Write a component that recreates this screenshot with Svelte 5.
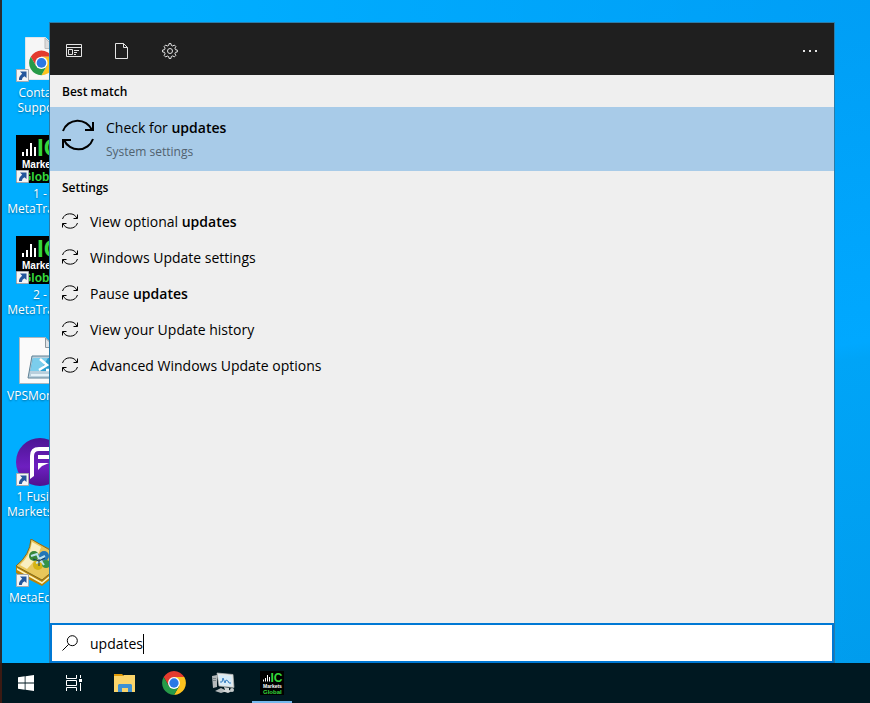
<script>
    let query = $state('updates');

    const shortcuts = [
        { lines: ['Contact', 'Support'], icon: 'support', link: true },
        { lines: ['1 -', 'MetaTrader'], icon: 'markets', link: true },
        { lines: ['2 -', 'MetaTrader'], icon: 'markets', link: true },
        { lines: ['VPSMonitor'], icon: 'script', link: false },
        { lines: ['1 Fusion', 'Markets MT'], icon: 'fusion', link: true },
        { lines: ['MetaEditor'], icon: 'editor', link: true }
    ];

    const settings = [
        { text: 'View optional ', match: 'updates' },
        { text: 'Windows Update settings' },
        { text: 'Pause ', match: 'updates' },
        { text: 'View your Update history' },
        { text: 'Advanced Windows Update options' }
    ];
</script>

{#snippet sync(size, stroke)}
    <svg width={size} height={size} viewBox="0 0 32 32" fill="none" stroke="#000" stroke-width={stroke}>
        <path d="M1 12A15.6 15.6 0 0 1 30 11M31 3v8h-8M31 20A15.6 15.6 0 0 1 2 21M1 29v-8h8" />
    </svg>
{/snippet}

{#snippet chromeShapes()}
    <path fill="#e33b2e" d="M4.95 13A22 22 0 0 1 43.05 13H24L14.47 29.5Z" />
    <path fill="#fcc31e" d="M43.05 13A22 22 0 0 1 24 46L33.53 29.5L24 13Z" />
    <path fill="#269a48" d="M24 46A22 22 0 0 1 4.95 13L14.47 29.5H33.53Z" />
    <circle cx="24" cy="24" r="11" fill="#fff" />
    <circle cx="24" cy="24" r="8.6" fill="#2a78e4" />
{/snippet}

{#snippet markets(size)}
    <svg width={size} height={size} viewBox="0 0 48 48" font-family="Liberation Sans, Arial, sans-serif" font-weight="bold">
        <rect width="48" height="48" />
        <path fill="#fff" d="M6 17h2v4H6zM10 14h2v7h-2zM14 8h2v13h-2zM18 12h2v9h-2z" />
        <text x="21" y="21" font-size="24" fill="#35d83c">IC</text>
        <text x="6" y="33" font-size="10" fill="#fff">Markets</text>
        <text x="6" y="46" font-size="12" fill="#35d83c">Global</text>
    </svg>
{/snippet}

{#snippet shortcutIcon(kind)}
    {#if kind === 'markets'}
        {@render markets(48)}
    {:else if kind === 'support'}
        <svg width="48" height="48" viewBox="0 0 48 48">
            <path fill="#f6f6f6" stroke="#dfe5ea" d="M9.500 3.500h20l10 10v32h-30z" />
            <path fill="#dcdcdc" stroke="#bbb" d="M29 4v10.500h10.500z" />
            <g transform="translate(12 15.500) scale(.56)">{@render chromeShapes()}</g>
        </svg>
    {:else if kind === 'script'}
        <svg width="48" height="48" viewBox="0 0 48 48">
            <path fill="#fafafa" stroke="#aeb7bd" d="M3.500 .5h26l10 10v36h-36z" />
            <path fill="#dfe4e8" stroke="#8d979e" d="M29.500 1v9.500H39z" />
            <path fill="#b9cfdc" stroke="#5f8296" d="M16 19h30l-4 22H12z" />
            <path fill="#2a9fd0" d="M17 21h28l-2.500 13H14.500z" />
            <path fill="#7bcdec" d="M17 21h15l-8 13h-9.500z" />
            <path fill="none" stroke="#fff" stroke-width="2.500" d="M24 22l7 6-8 5M30 33h6" />
            <path stroke="#e4f2f8" stroke-width="2" d="M15 38h27" />
        </svg>
    {:else if kind === 'fusion'}
        <svg width="48" height="48" viewBox="0 0 48 48">
            <defs>
                <linearGradient id="fusion" x1="0" y1="0" x2="0" y2="1">
                    <stop offset="0" stop-color="#4b1593" />
                    <stop offset=".6" stop-color="#6e1fc0" />
                    <stop offset="1" stop-color="#4e128f" />
                </linearGradient>
            </defs>
            <circle cx="24" cy="24" r="24" fill="url(#fusion)" />
            <path fill="none" stroke="#fff" stroke-width="4" d="M16 38V18q0-7 7-7h19" />
            <path fill="#fff" d="M14 36h4v2l-4 3zM22 17h19l-4 4H22zM22 25h11l-7 3-4 4z" />
        </svg>
    {:else}
        <svg width="48" height="48" viewBox="0 0 48 48">
            <path fill="#f7f3df" stroke="#9a8446" d="M17 2l27 13v9L27 37 9 24z" />
            <path fill="#b98309" d="M0 27l26 14 22-19v8L26 47 0 34z" />
            <path fill="#fff4b8" d="M1 29l25 14 21-17v2L26 45 1 31z" />
            <path fill="#e9c75a" stroke="#8a6815" d="M15 0Q14 16 0 27l26 14q14-10 18-24z" />
            <path fill="#f9efc2" d="M16 3q-2 14-12 23l7 4Q22 19 25 8z" />
            <circle cx="18" cy="17" r="5" fill="#368639" />
            <circle cx="28" cy="17" r="5" fill="#2377b7" />
            <circle cx="22" cy="26" r="5" fill="#d5b413" />
            <circle cx="30" cy="25" r="4" fill="#359247" />
            <path fill="none" stroke="#bfe3ee" stroke-width="2" d="M15 17l6-2 2 5 6-3M20 24l5-2 3 4" />
            <path fill="none" stroke="#183d57" d="M17 20l6 2 6-3M23 20v7" />
        </svg>
    {/if}
{/snippet}

<div class="screen">
    <main class="desktop">
        <div class="shortcuts">
            {#each shortcuts as item}
                <div class="shortcut">
                    <div class="picture">
                        {@render shortcutIcon(item.icon)}
                        {#if item.link}
                            <svg class="badge" width="13" height="13" viewBox="0 0 13 13">
                                <path fill="#f5f5f5" stroke="#a6aab0" d="M.5 .5h12v12H.5z" />
                                <path fill="#24569c" d="M4 2.500h6.500V9L8.500 7.200Q6 8.500 5.800 11H3Q2.500 7.500 6.200 4.800z" />
                            </svg>
                        {/if}
                    </div>
                    {#each item.lines as line}
                        <span>{line}</span>
                    {/each}
                </div>
            {/each}
        </div>

        <section class="panel">
            <header class="tabs">
                <button aria-label="Apps">
                    <svg width="16" height="16" viewBox="0 0 16 16" fill="none" stroke="#e4e4e4">
                        <path d="M.5 1.500h15v12H.5zM.5 4.500h15M2.500 6.500h4v5h-4zM8 7.500h5M8 9.500h3M8 11.500h2" />
                    </svg>
                </button>
                <button aria-label="Documents">
                    <svg width="16" height="16" viewBox="0 0 16 16" fill="none" stroke="#e4e4e4">
                        <path d="M1.500 .5h8l4 4v11h-12zM9.500 .5v4h4" />
                    </svg>
                </button>
                <button aria-label="Settings">
                    <svg width="16" height="16" viewBox="0 0 16 16" fill="none" stroke="#e4e4e4">
                        <path d="M6.700 2.400L7 .6h2l.3 1.800 1.500.6 1.500-1 1.600 1.600-1 1.500.6 1.600 1.800.3v2l-1.800.3-.6 1.500 1 1.500-1.600 1.600-1.500-1-1.500.6L9 15.400H7l-.3-1.800-1.500-.6-1.500 1-1.600-1.600 1-1.500-.6-1.600L.6 9V7l1.900-.3.6-1.600-1-1.500 1.600-1.600 1.500 1z" />
                        <circle cx="8" cy="8" r="2.500" />
                    </svg>
                </button>
                <button class="more" aria-label="More options">
                    <svg width="16" height="16" viewBox="0 0 16 16" fill="#e4e4e4">
                        <path d="M1 7h2v2H1zM7 7h2v2H7zM13 7h2v2h-2z" />
                    </svg>
                </button>
            </header>

            <h2>Best match</h2>
            <button class="best">
                {@render sync(32, 2)}
                <span class="detail">
                    <span>Check for <b>updates</b></span>
                    <small>System settings</small>
                </span>
            </button>

            <h2>Settings</h2>
            <ul>
                {#each settings as { text, match }}
                    <li>
                        <button class="result">
                            {@render sync(16, 2)}
                            <span>{text}{#if match}<b>{match}</b>{/if}</span>
                        </button>
                    </li>
                {/each}
            </ul>

            <label class="search">
                <svg width="16" height="16" viewBox="0 0 16 16" fill="none" stroke="#000">
                    <circle cx="10.300" cy="5.700" r="5" />
                    <path d="M6.700 9.300L.5 15.500" />
                </svg>
                <span class="field">
                    <input type="text" aria-label="Search" bind:value={query} />
                    <i class="caret"></i>
                </span>
            </label>
        </section>
    </main>

    <nav class="taskbar">
        <button aria-label="Start">
            <svg width="16" height="16" viewBox="0 0 16 16" fill="#fff">
                <path d="M0 2.200L6.700 1.300V7.600H0zM7.500 1.200L16 0V7.600H7.500zM0 8.400H6.700V14.700L0 13.800zM7.500 8.400H16V16L7.500 14.800z" />
            </svg>
        </button>
        <button aria-label="Task view">
            <svg width="16" height="16" viewBox="0 0 16 16" fill="none" stroke="#fff">
                <path d="M.5 0v3.500h10V0M.5 5.500h10v5H.5zM.5 16v-3.500h10V16M14.500 0v3M14.500 8v8" />
                <path fill="#fff" stroke="none" d="M13 4h3v3h-3z" />
            </svg>
        </button>
        <div class="apps">
            <button aria-label="File Explorer">
                <svg width="24" height="24" viewBox="0 0 24 24">
                    <path fill="#e19b08" d="M1 3h8l2 2H1z" />
                    <path fill="#fbd56b" d="M1 5h9l1-1h11v17H1z" />
                    <path fill="#3e91d4" d="M6 13h12l1 1v7h-4v-4H9v4H5v-7z" />
                </svg>
            </button>
            <button aria-label="Chrome">
                <svg width="26" height="26" viewBox="0 0 48 48">{@render chromeShapes()}</svg>
            </button>
            <button aria-label="Monitor">
                <svg width="24" height="24" viewBox="0 0 24 24">
                    <path fill="#b4b9bb" d="M1 5l5-1v12l-4 1zM4 20l6-3 6 3-6 2z" />
                    <path fill="#7c8588" d="M2 7h3v1H2zM2 9h3v1H2z" />
                    <path fill="#e6e8e7" stroke="#b5babb" stroke-width=".7" d="M6 2l16 1.500 1 13L8 15z" />
                    <path fill="#d7ebf8" d="M7.500 4l13 1 .5 10-12-1z" />
                    <path fill="none" stroke="#397fc1" d="M9 11h2l1-4 2 5 1-3 2 1 1 2h2" />
                    <path fill="#d4d7d7" d="M13 16l5 1v2l3 1-4 2-6-2 3-1z" />
                    <circle cx="21" cy="19" r="2" fill="#c5caca" />
                </svg>
            </button>
            <button class="active" aria-label="IC Markets Global">
                {@render markets(24)}
            </button>
        </div>
    </nav>
</div>

<style>
    :global(body) {
        margin: 0;
    }
    .screen {
        box-sizing: border-box;
        display: grid;
        font-family: "Open Sans", "Noto Sans", sans-serif;
        grid-template-rows: 1fr 40px;
        min-height: 100vh;
    }
    svg {
        display: block;
        flex: none;
    }
    button {
        background: none;
        border: 0;
        color: inherit;
        font: inherit;
        padding: 0;
        text-align: left;
    }
    b {
        font-weight: 600;
    }
    .desktop {
        background:
            linear-gradient(to right, #00aeff 20%, #00aeff00 100%),
            linear-gradient(172deg, #009bf6 0%, #009ff6 20%, #00a8ff 59%, #00a4f7 61%, #009ced 100%);
        border-left: 2px solid #292c31;
        display: flex;
    }
    .shortcuts {
        display: grid;
        grid-auto-rows: 101px;
        grid-template-columns: 76px;
        overflow: hidden;
        padding-top: 34px;
        width: 47px;
    }
    .shortcut {
        align-items: center;
        color: #fff;
        display: flex;
        flex-direction: column;
        font-size: 12px;
        line-height: 15px;
        text-shadow: 0 1px 2px #0006;
        white-space: nowrap;
    }
    .picture {
        margin-bottom: 3px;
        position: relative;
    }
    .badge {
        bottom: 0;
        left: 0;
        position: absolute;
    }
    .panel {
        background: #efefef;
        border: 1px solid #2b7ba8;
        border-bottom: 0;
        box-sizing: border-box;
        color: #000;
        display: flex;
        flex: 1;
        flex-direction: column;
        font-size: 14px;
        line-height: 20px;
        margin: 22px 35px 0 0;
    }
    .tabs {
        background: #1f1f1f;
        display: flex;
        gap: 32px;
        padding: 20px 16px 16px;
    }
    .more {
        margin-left: auto;
    }
    h2 {
        font-size: 12px;
        font-weight: 600;
        line-height: 30px;
        margin: 0;
        padding: 2px 12px 0;
    }
    .best {
        align-items: flex-start;
        background: #a8cbe8;
        display: flex;
        gap: 12px;
        height: 64px;
        padding: 12px;
    }
    .detail {
        display: grid;
        gap: 4px;
        margin-top: -1px;
    }
    small {
        color: #51626f;
        font-size: 12px;
    }
    ul {
        flex: 1;
        list-style: none;
        margin: 0;
        padding: 0;
    }
    .result {
        align-items: center;
        display: flex;
        gap: 12px;
        height: 36px;
        padding: 0 12px;
        width: 100%;
    }
    .result span,
    .field {
        padding-top: 2px;
    }
    .search {
        align-items: center;
        background: #fff;
        border: 2px solid #0078d4;
        box-sizing: border-box;
        display: flex;
        gap: 12px;
        height: 40px;
        padding: 0 10px;
    }
    .field {
        display: flex;
    }
    input {
        border: 0;
        caret-color: transparent;
        field-sizing: content;
        font: inherit;
        line-height: 20px;
        outline: 0;
        padding: 0;
    }
    .caret {
        background: #000;
        width: 1px;
    }
    .taskbar {
        background: #001821;
        border-left: 2px solid #3b1a13;
        display: flex;
    }
    .taskbar button {
        align-items: center;
        display: flex;
        height: 40px;
        justify-content: center;
        width: 48px;
    }
    .apps {
        display: flex;
        gap: 1px;
        margin-left: 3px;
    }
    .taskbar .active {
        background: linear-gradient(#76b9ed, #76b9ed) bottom / 40px 2px no-repeat;
    }
</style>
